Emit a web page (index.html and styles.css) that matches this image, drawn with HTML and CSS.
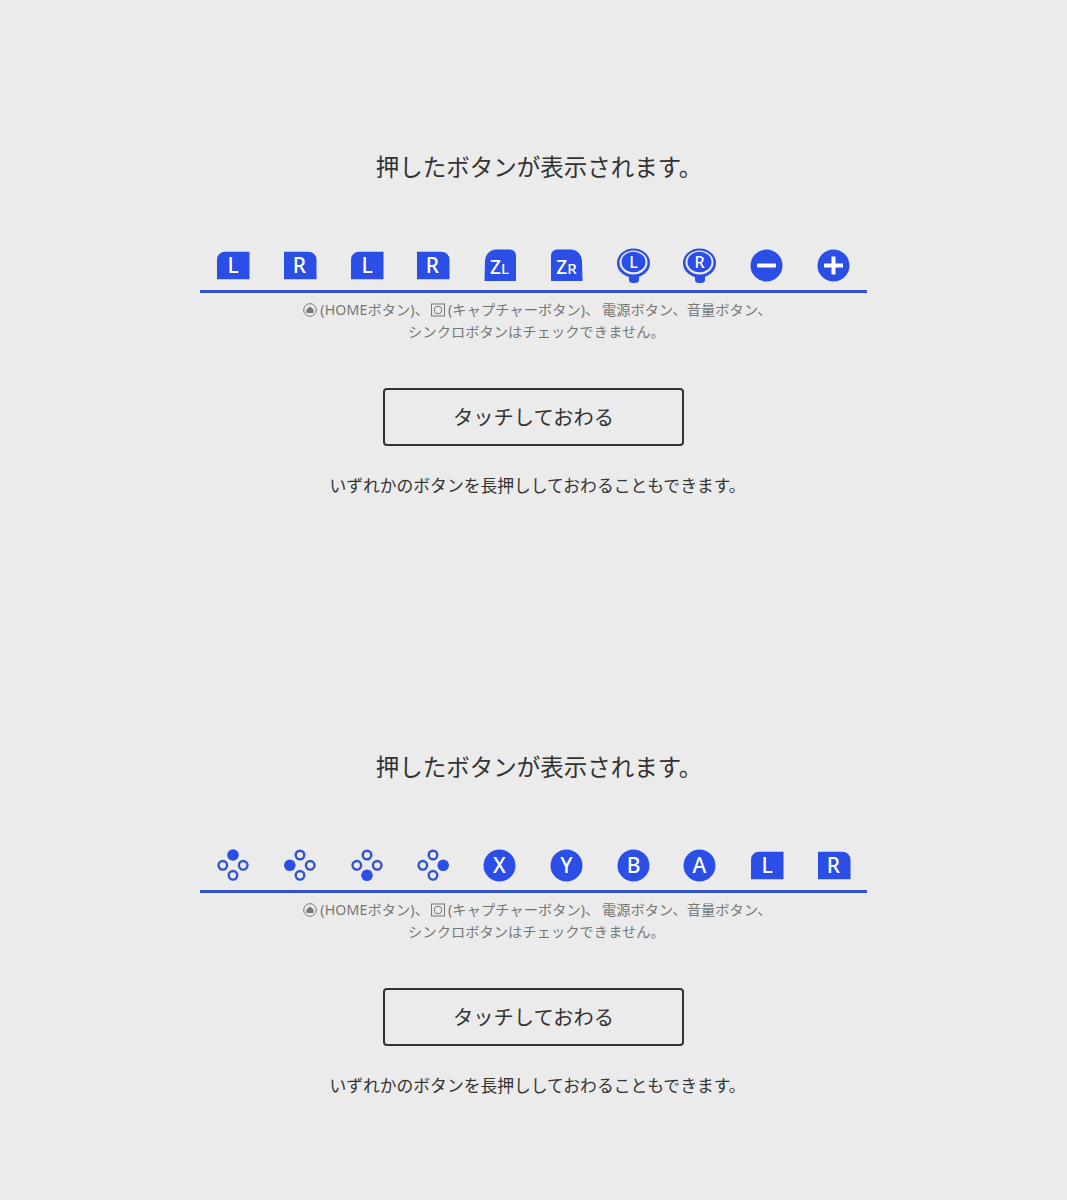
FILE: index.html
```html
<!DOCTYPE html>
<html lang="ja">
<head>
  <meta charset="UTF-8">
  <meta name="viewport" content="width=device-width, initial-scale=1.0">
  <title>ボタンチェック</title>
  <link rel="stylesheet" href="styles.css">
</head>
<body>
  <section class="panel">
    <h1 class="title">押したボタンが表示されます。</h1>
    <div class="icons">
      <svg class="icon" viewBox="0 0 34 34"><path d="M9 2.700H33.500V30.300H1V10.700A8 8 0 0 1 9 2.700Z"/><text class="key" x="17" y="24.300">L</text></svg>
      <svg class="icon" viewBox="0 0 34 34"><path d="M1 2.700H25.500A8 8 0 0 1 33.500 10.700V30.300H1Z"/><text class="key" x="16.500" y="24.300">R</text></svg>
      <svg class="icon" viewBox="0 0 34 34"><path d="M9 2.700H33.500V30.300H1V10.700A8 8 0 0 1 9 2.700Z"/><text class="key" x="17" y="24.300">L</text></svg>
      <svg class="icon" viewBox="0 0 34 34"><path d="M1 2.700H25.500A8 8 0 0 1 33.500 10.700V30.300H1Z"/><text class="key" x="16.500" y="24.300">R</text></svg>
      <svg class="icon" viewBox="0 0 34 34"><path d="M13 .5H27A6 6 0 0 1 33 6.500V32H1.500L2 12A11.500 11.500 0 0 1 13 .5Z"/><text class="key" x="16.500" y="24.500"><tspan class="big">Z</tspan><tspan class="small">L</tspan></text></svg>
      <svg class="icon" viewBox="0 0 34 34"><path d="M7 .5H21A11.500 11.500 0 0 1 32 12L32.500 32H1V6.500A6 6 0 0 1 7 .5Z"/><text class="key" x="16.500" y="24.500"><tspan class="big">Z</tspan><tspan class="small">R</tspan></text></svg>
      <svg class="icon" viewBox="0 0 34 34">
        <path d="M12 26H22V31A4 3 0 0 1 18 34H16A4 3 0 0 1 12 31Z"/>
        <ellipse cx="16.500" cy="14" rx="16.500" ry="14.500"/>
        <ellipse class="ring" cx="16.500" cy="13.500" rx="14" ry="12"/>
        <ellipse cx="16.500" cy="13" rx="12" ry="10.300"/>
        <text class="key stick" x="16.500" y="18.500">L</text>
      </svg>
      <svg class="icon" viewBox="0 0 34 34">
        <path d="M12 26H22V31A4 3 0 0 1 18 34H16A4 3 0 0 1 12 31Z"/>
        <ellipse cx="16.500" cy="14" rx="16.500" ry="14.500"/>
        <ellipse class="ring" cx="16.500" cy="13.500" rx="14" ry="12"/>
        <ellipse cx="16.500" cy="13" rx="12" ry="10.300"/>
        <text class="key stick" x="16.500" y="18.500">R</text>
      </svg>
      <svg class="icon" viewBox="0 0 34 34"><circle cx="16.500" cy="16.500" r="16"/><rect class="mark" x="7" y="14.500" width="19" height="4" rx="1"/></svg>
      <svg class="icon" viewBox="0 0 34 34"><circle cx="16.500" cy="16.500" r="16"/><path class="mark" d="M14.500 7.500H18.500V14.500H26V18.500H18.500V25.500H14.500V18.500H7V14.500H14.500Z"/></svg>
    </div>
    <p class="note">
      <svg class="glyph" viewBox="0 0 14 14"><circle cx="7" cy="7" r="6.300"/><path class="glyph-fill" d="M7 3.500 10.500 6.500V10H3.500V6.500Z"/></svg>(HOMEボタン)、<svg class="glyph" viewBox="0 0 14 14"><rect x=".5" y="1" width="13" height="12"/><circle cx="7" cy="7" r="3.800"/></svg>(キャプチャーボタン)、&thinsp;電源ボタン、音量ボタン、<br>シンクロボタンはチェックできません。
    </p>
    <button class="finish">タッチしておわる</button>
    <p class="hint">いずれかのボタンを長押ししておわることもできます。</p>
  </section>

  <section class="panel">
    <h1 class="title">押したボタンが表示されます。</h1>
    <div class="icons">
      <svg class="icon pad" viewBox="0 0 34 34"><circle class="on" cx="17" cy="6" r="5.800"/><circle cx="6.800" cy="16.300" r="4.300"/><circle cx="27.200" cy="16.300" r="4.300"/><circle cx="17" cy="26.300" r="4.300"/></svg>
      <svg class="icon pad" viewBox="0 0 34 34"><circle cx="17" cy="6" r="4.300"/><circle class="on" cx="6.800" cy="16.300" r="5.800"/><circle cx="27.200" cy="16.300" r="4.300"/><circle cx="17" cy="26.300" r="4.300"/></svg>
      <svg class="icon pad" viewBox="0 0 34 34"><circle cx="17" cy="6" r="4.300"/><circle cx="6.800" cy="16.300" r="4.300"/><circle cx="27.200" cy="16.300" r="4.300"/><circle class="on" cx="17" cy="26.300" r="5.800"/></svg>
      <svg class="icon pad" viewBox="0 0 34 34"><circle cx="17" cy="6" r="4.300"/><circle cx="6.800" cy="16.300" r="4.300"/><circle class="on" cx="27.200" cy="16.300" r="5.800"/><circle cx="17" cy="26.300" r="4.300"/></svg>
      <svg class="icon" viewBox="0 0 34 34"><circle cx="16.500" cy="16.500" r="16"/><text class="key" x="16.500" y="24">X</text></svg>
      <svg class="icon" viewBox="0 0 34 34"><circle cx="16.500" cy="16.500" r="16"/><text class="key" x="16.500" y="24">Y</text></svg>
      <svg class="icon" viewBox="0 0 34 34"><circle cx="16.500" cy="16.500" r="16"/><text class="key" x="16.500" y="24">B</text></svg>
      <svg class="icon" viewBox="0 0 34 34"><circle cx="16.500" cy="16.500" r="16"/><text class="key" x="16.500" y="24">A</text></svg>
      <svg class="icon" viewBox="0 0 34 34"><path d="M9 2.700H33.500V30.300H1V10.700A8 8 0 0 1 9 2.700Z"/><text class="key" x="17" y="24.300">L</text></svg>
      <svg class="icon" viewBox="0 0 34 34"><path d="M1 2.700H25.500A8 8 0 0 1 33.500 10.700V30.300H1Z"/><text class="key" x="16.500" y="24.300">R</text></svg>
    </div>
    <p class="note">
      <svg class="glyph" viewBox="0 0 14 14"><circle cx="7" cy="7" r="6.300"/><path class="glyph-fill" d="M7 3.500 10.500 6.500V10H3.500V6.500Z"/></svg>(HOMEボタン)、<svg class="glyph" viewBox="0 0 14 14"><rect x=".5" y="1" width="13" height="12"/><circle cx="7" cy="7" r="3.800"/></svg>(キャプチャーボタン)、&thinsp;電源ボタン、音量ボタン、<br>シンクロボタンはチェックできません。
    </p>
    <button class="finish">タッチしておわる</button>
    <p class="hint">いずれかのボタンを長押ししておわることもできます。</p>
  </section>
</body>
</html>
```

FILE: styles.css
```css
body {
  margin: 0;
  background-color: #ebebeb;
  color: #333;
  font-family: "Noto Sans CJK JP", "Noto Sans", sans-serif;
}
.panel {
  display: flex;
  flex-direction: column;
  align-items: center;
  box-sizing: border-box;
  height: 600px;
  padding-top: 149px;
}
.title {
  margin: 0;
  padding-left: 11px;
  font-size: 23.500px;
  font-weight: 400;
  line-height: 34px;
}
.icons {
  display: grid;
  grid-template-columns: repeat(10, 1fr);
  justify-items: center;
  align-items: start;
  box-sizing: border-box;
  width: 667px;
  height: 44px;
  margin-top: 66px;
  border-bottom: 3px solid #3253d0;
}
.icon {
  width: 34px;
  height: 34px;
  overflow: visible;
  fill: #2b4ee6;
}
.key {
  fill: #fff;
  font-family: "Noto Sans", sans-serif;
  font-size: 21px;
  font-weight: 500;
  text-anchor: middle;
}
.key .big {
  font-size: 19px;
  font-weight: 500;
}
.key .small {
  font-size: 15px;
  font-weight: 500;
}
.key.stick {
  font-size: 16px;
}
.ring {
  fill: #ebebeb;
}
.mark {
  fill: #fff;
}
.pad circle {
  fill: none;
  stroke: #3253d0;
  stroke-width: 2.400;
}
.pad .on {
  fill: #2b4ee6;
  stroke: none;
}
.note {
  margin: 6px 0 0;
  padding-left: 6px;
  color: #777;
  font-family: "Noto Sans", "Noto Sans CJK JP", sans-serif;
  font-size: 14.200px;
  letter-spacing: 0.1px;
  line-height: 21.500px;
  text-align: center;
}
.glyph {
  width: 14px;
  height: 14px;
  margin: 0 3px 0 2px;
  vertical-align: -2px;
  fill: none;
  stroke: #777;
  stroke-width: 1;
}
.glyph-fill {
  fill: #777;
  stroke: none;
}
.finish {
  width: 301px;
  height: 58px;
  margin-top: 46px;
  padding: 0 0 2px;
  border: 2px solid #333;
  border-radius: 4px;
  background: none;
  color: #333;
  font-family: inherit;
  font-size: 20.300px;
  cursor: pointer;
}
.hint {
  margin: 27px 0 0;
  padding-left: 8px;
  font-size: 16.800px;
  line-height: 24px;
}
```
